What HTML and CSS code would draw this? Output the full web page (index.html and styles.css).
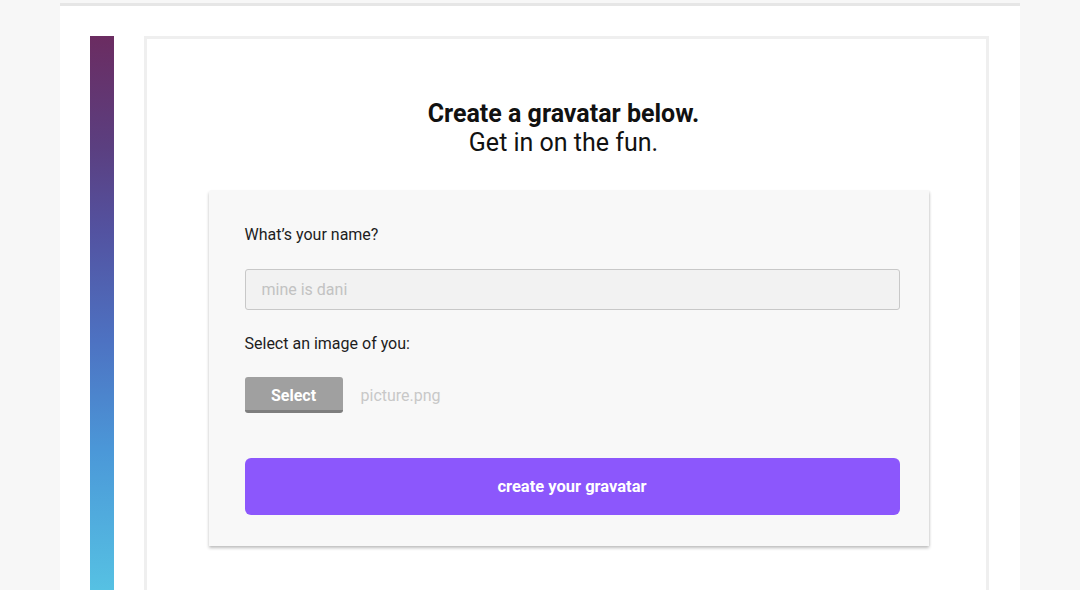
FILE: index.html
```html
<!DOCTYPE html>
<html>
<head>
<meta charset="utf-8">
<link rel="stylesheet" href="styles.css">
</head>
<body>
<div class="page">
  <div class="bar"></div>
  <div class="card">
    <h1 class="title"><strong>Create a gravatar below.</strong><span>Get in on the fun.</span></h1>
    <form class="form">
      <label class="label">What’s your name?</label>
      <input class="input" type="text" placeholder="mine is dani">
      <label class="label label2">Select an image of you:</label>
      <div class="filerow">
        <button type="button" class="select">Select</button>
        <span class="filename">picture.png</span>
      </div>
      <button type="button" class="submit">create your gravatar</button>
    </form>
  </div>
</div>
</body>
</html>
```
FILE: styles.css
```css
html, body { margin: 0; padding: 0; }
body {
  background: #f7f7f7;
  font-family: Roboto, "Liberation Sans", sans-serif;
}
.page {
  width: 960px;
  margin: 3px auto 0;
  border-top: 3px solid #e6e6e6;
  background: #fff;
  height: 587px;
  box-sizing: border-box;
  padding: 30px 31px 0 30px;
  display: flex;
  align-items: stretch;
}
.bar {
  width: 24px;
  flex: none;
  background: linear-gradient(to bottom, #6b2c61 0%, #5b3f80 20%, #5352a0 35%, #4d72c2 55%, #4b98d8 75%, #56c1e3 100%);
}
.card {
  flex: 1;
  margin-left: 30px;
  border: 3px solid #efefef;
  border-bottom: none;
  box-sizing: border-box;
  padding-top: 60px;
}
.title {
  margin: 0;
  text-align: center;
  font-size: 25px;
  line-height: 29px;
  color: #111;
  font-weight: 400;
  padding-right: 6px;
}
.title strong { display: block; font-weight: 700; }
.title span { display: block; }
.form {
  width: 720px;
  margin: 34px auto 0;
  background: #f8f8f8;
  box-sizing: border-box;
  padding: 34px 29px 31px 36px;
  box-shadow: 0 2px 3px rgba(0,0,0,0.25), 1px 0 2px rgba(0,0,0,0.06);
  display: flex;
  flex-direction: column;
  align-items: flex-start;
  position: relative;
  left: 2px;
}
.label {
  font-size: 16px;
  line-height: 20px;
  color: #1d1d1d;
}
.label2 { margin-top: 24px; }
.input {
  margin-top: 24px;
  width: 100%;
  height: 41px;
  box-sizing: border-box;
  border: 1px solid #c8c8c8;
  border-radius: 3px;
  background: #f2f2f2;
  padding: 0 16px;
  font-family: Roboto, "Liberation Sans", sans-serif;
  font-size: 16px;
  outline: none;
}
.input::placeholder { color: #c2c2c2; }
.filerow {
  margin-top: 23px;
  display: flex;
  align-items: center;
  gap: 18px;
}
.select {
  width: 98px;
  height: 36px;
  border: none;
  border-bottom: 3px solid #7e7e7e;
  border-radius: 3px;
  background: #a0a0a0;
  color: #fff;
  font-family: Roboto, "Liberation Sans", sans-serif;
  font-weight: 700;
  font-size: 16px;
  padding: 3px 0 0;
}
.filename {
  color: #c8c8c8;
  font-size: 16px;
}
.submit {
  margin-top: 45px;
  width: 100%;
  height: 57px;
  border: none;
  border-radius: 6px;
  background: #8c57fc;
  color: #fff;
  font-family: Roboto, "Liberation Sans", sans-serif;
  font-weight: 700;
  font-size: 16.5px;
}
```
